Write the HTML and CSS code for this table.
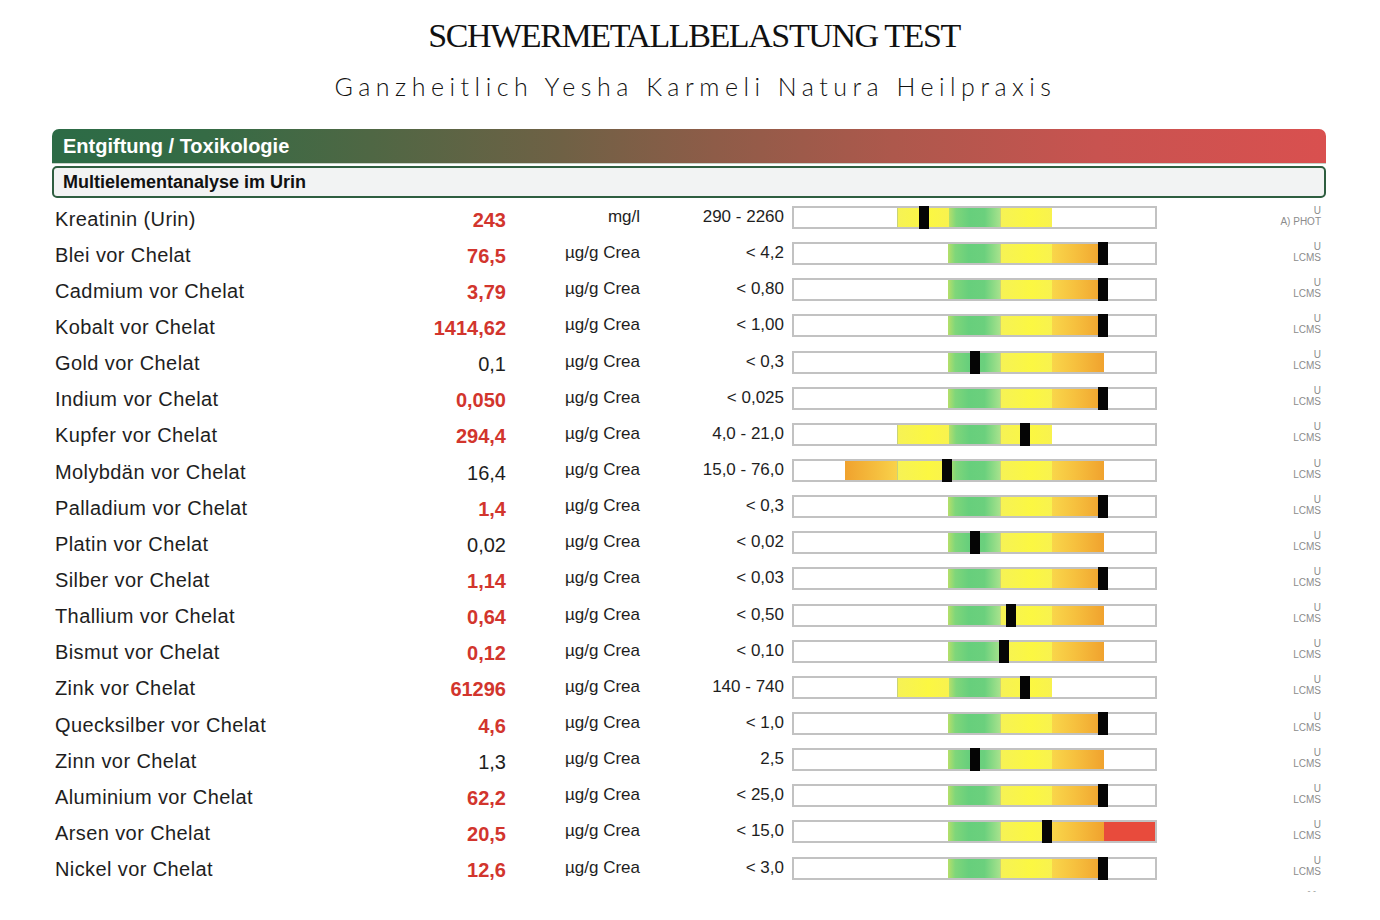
FILE: index.html
```html
<!DOCTYPE html>
<html lang="de">
<head>
<meta charset="utf-8">
<title>Schwermetallbelastung Test</title>
<link rel="stylesheet" href="styles.css">
</head>
<body>
<div class="page">
  <header class="head">
    <h1 class="title">SCHWERMETALLBELASTUNG TEST</h1>
    <p class="subtitle">Ganzheitlich Yesha Karmeli Natura Heilpraxis</p>
  </header>
  <section class="report">
    <div class="cat">Entgiftung / Toxikologie</div>
    <div class="sub">Multielementanalyse im Urin</div>
    <div class="rows">
      <div class="row"><span class="name">Kreatinin (Urin)</span><span class="val hi">243</span><span class="unit">mg/l</span><span class="ref">290 - 2260</span><div class="bar"><i></i><i></i><i class="y"></i><i class="g"></i><i class="y"></i><i></i><i></i><b class="mk" style="left:125px"></b></div><span class="code">U<br>A) PHOT</span></div>
      <div class="row"><span class="name">Blei vor Chelat</span><span class="val hi">76,5</span><span class="unit">µg/g Crea</span><span class="ref">&lt; 4,2</span><div class="bar"><i></i><i></i><i></i><i class="g"></i><i class="y"></i><i class="or"></i><i></i><b class="mk" style="left:304px"></b></div><span class="code">U<br>LCMS</span></div>
      <div class="row"><span class="name">Cadmium vor Chelat</span><span class="val hi">3,79</span><span class="unit">µg/g Crea</span><span class="ref">&lt; 0,80</span><div class="bar"><i></i><i></i><i></i><i class="g"></i><i class="y"></i><i class="or"></i><i></i><b class="mk" style="left:304px"></b></div><span class="code">U<br>LCMS</span></div>
      <div class="row"><span class="name">Kobalt vor Chelat</span><span class="val hi">1414,62</span><span class="unit">µg/g Crea</span><span class="ref">&lt; 1,00</span><div class="bar"><i></i><i></i><i></i><i class="g"></i><i class="y"></i><i class="or"></i><i></i><b class="mk" style="left:304px"></b></div><span class="code">U<br>LCMS</span></div>
      <div class="row"><span class="name">Gold vor Chelat</span><span class="val">0,1</span><span class="unit">µg/g Crea</span><span class="ref">&lt; 0,3</span><div class="bar"><i></i><i></i><i></i><i class="g"></i><i class="y"></i><i class="or"></i><i></i><b class="mk" style="left:176px"></b></div><span class="code">U<br>LCMS</span></div>
      <div class="row"><span class="name">Indium vor Chelat</span><span class="val hi">0,050</span><span class="unit">µg/g Crea</span><span class="ref">&lt; 0,025</span><div class="bar"><i></i><i></i><i></i><i class="g"></i><i class="y"></i><i class="or"></i><i></i><b class="mk" style="left:304px"></b></div><span class="code">U<br>LCMS</span></div>
      <div class="row"><span class="name">Kupfer vor Chelat</span><span class="val hi">294,4</span><span class="unit">µg/g Crea</span><span class="ref">4,0 - 21,0</span><div class="bar"><i></i><i></i><i class="y"></i><i class="g"></i><i class="y"></i><i></i><i></i><b class="mk" style="left:226px"></b></div><span class="code">U<br>LCMS</span></div>
      <div class="row"><span class="name">Molybdän vor Chelat</span><span class="val">16,4</span><span class="unit">µg/g Crea</span><span class="ref">15,0 - 76,0</span><div class="bar"><i></i><i class="ol"></i><i class="y"></i><i class="g"></i><i class="y"></i><i class="or"></i><i></i><b class="mk" style="left:148px"></b></div><span class="code">U<br>LCMS</span></div>
      <div class="row"><span class="name">Palladium vor Chelat</span><span class="val hi">1,4</span><span class="unit">µg/g Crea</span><span class="ref">&lt; 0,3</span><div class="bar"><i></i><i></i><i></i><i class="g"></i><i class="y"></i><i class="or"></i><i></i><b class="mk" style="left:304px"></b></div><span class="code">U<br>LCMS</span></div>
      <div class="row"><span class="name">Platin vor Chelat</span><span class="val">0,02</span><span class="unit">µg/g Crea</span><span class="ref">&lt; 0,02</span><div class="bar"><i></i><i></i><i></i><i class="g"></i><i class="y"></i><i class="or"></i><i></i><b class="mk" style="left:176px"></b></div><span class="code">U<br>LCMS</span></div>
      <div class="row"><span class="name">Silber vor Chelat</span><span class="val hi">1,14</span><span class="unit">µg/g Crea</span><span class="ref">&lt; 0,03</span><div class="bar"><i></i><i></i><i></i><i class="g"></i><i class="y"></i><i class="or"></i><i></i><b class="mk" style="left:304px"></b></div><span class="code">U<br>LCMS</span></div>
      <div class="row"><span class="name">Thallium vor Chelat</span><span class="val hi">0,64</span><span class="unit">µg/g Crea</span><span class="ref">&lt; 0,50</span><div class="bar"><i></i><i></i><i></i><i class="g"></i><i class="y"></i><i class="or"></i><i></i><b class="mk" style="left:212px"></b></div><span class="code">U<br>LCMS</span></div>
      <div class="row"><span class="name">Bismut vor Chelat</span><span class="val hi">0,12</span><span class="unit">µg/g Crea</span><span class="ref">&lt; 0,10</span><div class="bar"><i></i><i></i><i></i><i class="g"></i><i class="y"></i><i class="or"></i><i></i><b class="mk" style="left:205px"></b></div><span class="code">U<br>LCMS</span></div>
      <div class="row"><span class="name">Zink vor Chelat</span><span class="val hi">61296</span><span class="unit">µg/g Crea</span><span class="ref">140 - 740</span><div class="bar"><i></i><i></i><i class="y"></i><i class="g"></i><i class="y"></i><i></i><i></i><b class="mk" style="left:226px"></b></div><span class="code">U<br>LCMS</span></div>
      <div class="row"><span class="name">Quecksilber vor Chelat</span><span class="val hi">4,6</span><span class="unit">µg/g Crea</span><span class="ref">&lt; 1,0</span><div class="bar"><i></i><i></i><i></i><i class="g"></i><i class="y"></i><i class="or"></i><i></i><b class="mk" style="left:304px"></b></div><span class="code">U<br>LCMS</span></div>
      <div class="row"><span class="name">Zinn vor Chelat</span><span class="val">1,3</span><span class="unit">µg/g Crea</span><span class="ref">2,5</span><div class="bar"><i></i><i></i><i></i><i class="g"></i><i class="y"></i><i class="or"></i><i></i><b class="mk" style="left:176px"></b></div><span class="code">U<br>LCMS</span></div>
      <div class="row"><span class="name">Aluminium vor Chelat</span><span class="val hi">62,2</span><span class="unit">µg/g Crea</span><span class="ref">&lt; 25,0</span><div class="bar"><i></i><i></i><i></i><i class="g"></i><i class="y"></i><i class="or"></i><i></i><b class="mk" style="left:304px"></b></div><span class="code">U<br>LCMS</span></div>
      <div class="row"><span class="name">Arsen vor Chelat</span><span class="val hi">20,5</span><span class="unit">µg/g Crea</span><span class="ref">&lt; 15,0</span><div class="bar"><i></i><i></i><i></i><i class="g"></i><i class="y"></i><i class="or"></i><i class="r"></i><b class="mk" style="left:248px"></b></div><span class="code">U<br>LCMS</span></div>
      <div class="row"><span class="name">Nickel vor Chelat</span><span class="val hi">12,6</span><span class="unit">µg/g Crea</span><span class="ref">&lt; 3,0</span><div class="bar"><i></i><i></i><i></i><i class="g"></i><i class="y"></i><i class="or"></i><i></i><b class="mk" style="left:304px"></b></div><span class="code">U<br>LCMS</span></div>
    </div>
    <div class="more">- -</div>
  </section>
</div>
</body>
</html>
```

FILE: styles.css
```css
* { box-sizing: border-box; }

html, body {
  margin: 0;
  padding: 0;
  background: #ffffff;
}

body {
  font-family: "Liberation Sans", Arial, sans-serif;
  color: #1c1c1c;
}

.page {
  width: 1380px;
  height: 920px;
  padding: 0 54px 0 52px;
  overflow: hidden;
}

.head {
  text-align: center;
}

.title {
  margin: 16px 0 0;
  padding-left: 10px;
  font-family: "Liberation Serif", "Times New Roman", serif;
  font-weight: 400;
  font-size: 34px;
  line-height: 40px;
  letter-spacing: -1.4px;
  color: #111;
}

.subtitle {
  margin: 15px 0 0;
  padding-left: 13px;
  font-family: "Lato", "Open Sans", sans-serif;
  font-weight: 300;
  font-size: 25px;
  line-height: 30px;
  letter-spacing: 5.5px;
  color: #111;
}

.report {
  margin-top: 28px;
}

.cat {
  height: 34px;
  padding: 5px 0 0 11px;
  border-radius: 7px 7px 0 0;
  background: linear-gradient(to right, #2c6b46 0%, #356b45 12%, #4f6744 25%, #6f6145 40%, #8e5c48 52%, #ad584c 66%, #c85350 82%, #d9504f 100%);
  color: #ffffff;
  font-weight: 700;
  font-size: 20px;
  line-height: 24px;
  box-shadow: 0 1px 0 #c8d2c8;
}

.sub {
  margin-top: 3px;
  height: 32px;
  padding: 3px 0 0 9px;
  border: 2px solid #2f5e40;
  border-radius: 5px;
  background: #f2f3f3;
  font-weight: 700;
  font-size: 18px;
  line-height: 22px;
  color: #111;
}

.rows {
  margin-top: 2px;
}

.row {
  display: grid;
  grid-template-columns: 300px 151px 134px 152px 365px 164px;
  align-items: center;
  height: 36.15px;
  padding: 0 5px 0 3px;
}

.name {
  font-size: 20px;
  letter-spacing: 0.4px;
  padding-top: 2px;
  color: #1e1e1e;
}

.val {
  text-align: right;
  font-size: 20px;
  padding-top: 4px;
  color: #1e1e1e;
}

.val.hi {
  color: #d2352d;
  font-weight: 700;
}

.unit {
  text-align: right;
  font-size: 17px;
  color: #1e1e1e;
  padding-bottom: 2px;
}

.ref {
  text-align: right;
  font-size: 17px;
  color: #1e1e1e;
  padding-right: 8px;
  padding-bottom: 2px;
}

.bar {
  position: relative;
  display: flex;
  height: 23px;
  margin-bottom: 1px;
  border: 2px solid #c2c2c2;
  background: #ffffff;
}

.bar i {
  flex: 1;
}

.bar i.y {
  background: linear-gradient(to right, #f6f255, #fbf742 60%, #f8f24f);
  border-left: 1px solid #c9d37a;
}

.bar i.g {
  background: linear-gradient(to right, #b5df6a 0%, #7fd67a 14%, #67cf7c 40%, #6bd07d 70%, #a6e28c 100%);
}

.bar i.or {
  background: linear-gradient(to right, #f9d64a 0%, #f6c03e 45%, #f0a22e 100%);
}

.bar i.ol {
  background: linear-gradient(to right, #f0a22e 0%, #f5be3e 60%, #f9d24a 100%);
}

.bar i.r {
  background: #e84b3c;
}

.mk {
  position: absolute;
  top: -2px;
  bottom: -2px;
  width: 10px;
  background: #050505;
}

.code {
  text-align: right;
  font-size: 10px;
  line-height: 11px;
  color: #8c8c8c;
  padding-bottom: 5px;
}

.more {
  text-align: right;
  padding-right: 10px;
  font-size: 9px;
  line-height: 8px;
  color: #9a9a9a;
}
```
